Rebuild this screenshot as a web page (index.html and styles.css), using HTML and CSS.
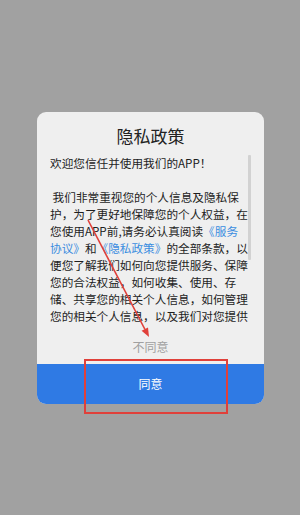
FILE: index.html
```html
<!DOCTYPE html>
<html lang="zh">
<head>
<meta charset="utf-8">
<link rel="stylesheet" href="styles.css">
</head>
<body>
<div class="screen">
  <div class="card">
    <div class="title">隐私政策</div>
    <div class="body">
      <div class="text">欢迎您信任并使用我们的APP！<br><br>&nbsp;我们非常重视您的个人信息及隐私保<br>护，为了更好地保障您的个人权益，在<br>您使用APP前,请务必认真阅读<span class="link">《服务<br>协议》</span>和<span class="link">《隐私政策》</span>的全部条款，以<br>便您了解我们如何向您提供服务、保障<br>您的合法权益，如何收集、使用、存<br>储、共享您的相关个人信息，如何管理<br>您的相关个人信息，以及我们对您提供</div>
      <div class="scrollbar"></div>
    </div>
    <div class="disagree">不同意</div>
    <div class="agree">同意</div>
  </div>
  <svg class="annot" width="300" height="515" viewBox="0 0 300 515">
    <rect x="85" y="360" width="142" height="53" fill="none" stroke="#e0403a" stroke-width="2"/>
    <line x1="88" y1="220" x2="145" y2="329.5" stroke="#e0403a" stroke-width="1.6"/>
    <polygon points="149,337 141.6,330.8 148,327.4" fill="#e0403a"/>
  </svg>
</div>
</body>
</html>
```
FILE: styles.css
```css
html, body {
  margin: 0;
  padding: 0;
}
body {
  background: #a1a1a1;
  font-family: "Noto Sans CJK SC", "Noto Sans", sans-serif;
}
.screen {
  position: relative;
  width: 300px;
  height: 515px;
  overflow: hidden;
  padding-top: 112px;
  box-sizing: border-box;
}
.card {
  margin-left: 37px;
  width: 227px;
  background: #efefef;
  border-radius: 9px;
  overflow: hidden;
}
.title {
  text-align: center;
  font-size: 17px;
  line-height: 24px;
  color: #222;
  padding-top: 12px;
  padding-bottom: 6px;
}
.body {
  display: flex;
  padding: 0 13px;
  height: 170px;
  overflow: hidden;
}
.text {
  width: 198px;
  flex: none;
  font-size: 11.65px;
  line-height: 17px;
  color: #1e1e1e;
  white-space: nowrap;
}
.link {
  color: #3b8de0;
}
.scrollbar {
  flex: none;
  width: 3px;
  height: 105px;
  margin-top: 1px;
  background: #d2d2d2;
  border-radius: 1px;
}
.disagree {
  height: 40px;
  box-sizing: border-box;
  padding-top: 15px;
  text-align: center;
  font-size: 12px;
  line-height: 16px;
  color: #a0a0a0;
}
.agree {
  height: 40px;
  background: #2f7ae4;
  color: #ffffff;
  text-align: center;
  font-size: 12px;
  line-height: 40px;
}
.annot {
  position: absolute;
  left: 0;
  top: 0;
  pointer-events: none;
}
```
